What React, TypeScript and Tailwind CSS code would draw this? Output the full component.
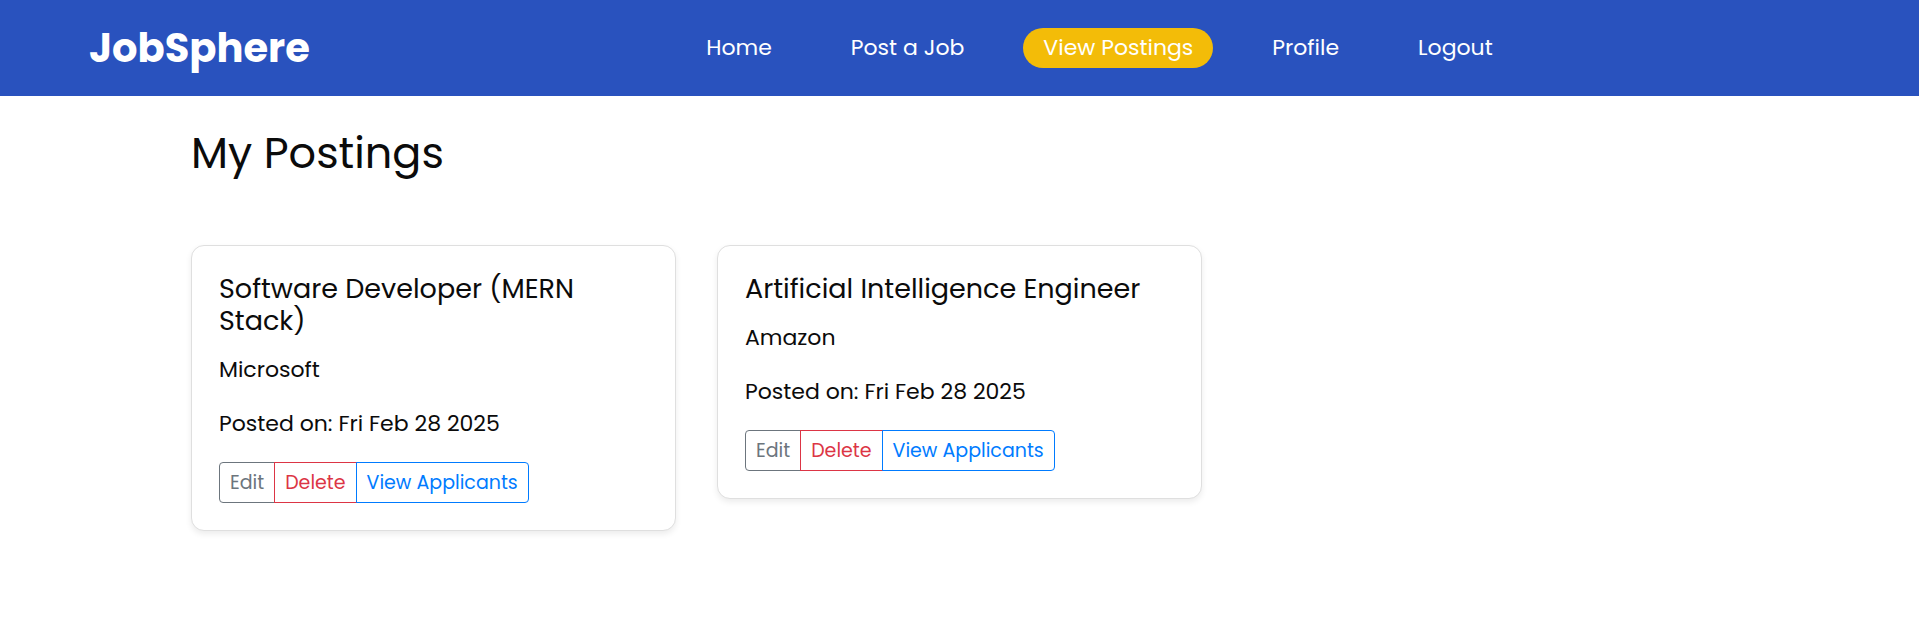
const links = [
  { label: "Home", active: false },
  { label: "Post a Job", active: false },
  { label: "View Postings", active: true },
  { label: "Profile", active: false },
  { label: "Logout", active: false },
];

const postings = [
  { title: "Software Developer (MERN Stack)", company: "Microsoft", posted: "Fri Feb 28 2025" },
  { title: "Artificial Intelligence Engineer", company: "Amazon", posted: "Fri Feb 28 2025" },
];

function Header() {
  return (
    <header className="flex h-24 items-center bg-[#2952be] pr-[30px] pl-[89px] text-white">
      <a href="#" className="text-[40px] font-bold">
        JobSphere
      </a>
      <nav className="mx-auto">
        <ul className="flex gap-[39px]">
          {links.map((link) => (
            <li key={link.label}>
              <a
                href="#"
                aria-current={link.active ? "page" : undefined}
                className={
                  link.active
                    ? "block rounded-full bg-[#f3bc08] px-5 leading-10"
                    : "block rounded-full px-5 leading-10"
                }
              >
                {link.label}
              </a>
            </li>
          ))}
        </ul>
      </nav>
    </header>
  );
}

function PostingCard({ title, company, posted }: { title: string; company: string; posted: string }) {
  return (
    <article className="rounded-[13px] border border-[#dfdfdf] bg-white p-[27px] shadow-[0_3px_6px_rgba(0,0,0,0.08)]">
      <h2 className="mb-4 text-[27px] leading-8">{title}</h2>
      <p className="mb-[21px] leading-[33px]">{company}</p>
      <p className="mb-[22px] leading-[33px]">Posted on: {posted}</p>
      <div className="flex text-[19px] leading-[29px]" role="group" aria-label={title}>
        <button type="button" className="rounded-l border border-[#6c757d] px-[10px] py-[5px] text-[#6c757d]">
          Edit
        </button>
        <button type="button" className="-ml-px border border-[#dc3545] px-[10px] py-[5px] text-[#dc3545]">
          Delete
        </button>
        <button type="button" className="-ml-px rounded-r border border-[#007bff] px-[10px] py-[5px] text-[#007bff]">
          View Applicants
        </button>
      </div>
    </article>
  );
}

export default function App() {
  return (
    <div className="bg-white font-['Poppins','Inter',sans-serif] text-[22px] text-[#0b0b0b]">
      <Header />
      <main className="px-[191px] pt-[29px] pb-10">
        <h1 className="mb-16 text-[43px] leading-[56px]">My Postings</h1>
        <div className="grid grid-cols-3 items-start gap-[41px]">
          {postings.map((posting) => (
            <PostingCard key={posting.title} {...posting} />
          ))}
        </div>
      </main>
    </div>
  );
}
